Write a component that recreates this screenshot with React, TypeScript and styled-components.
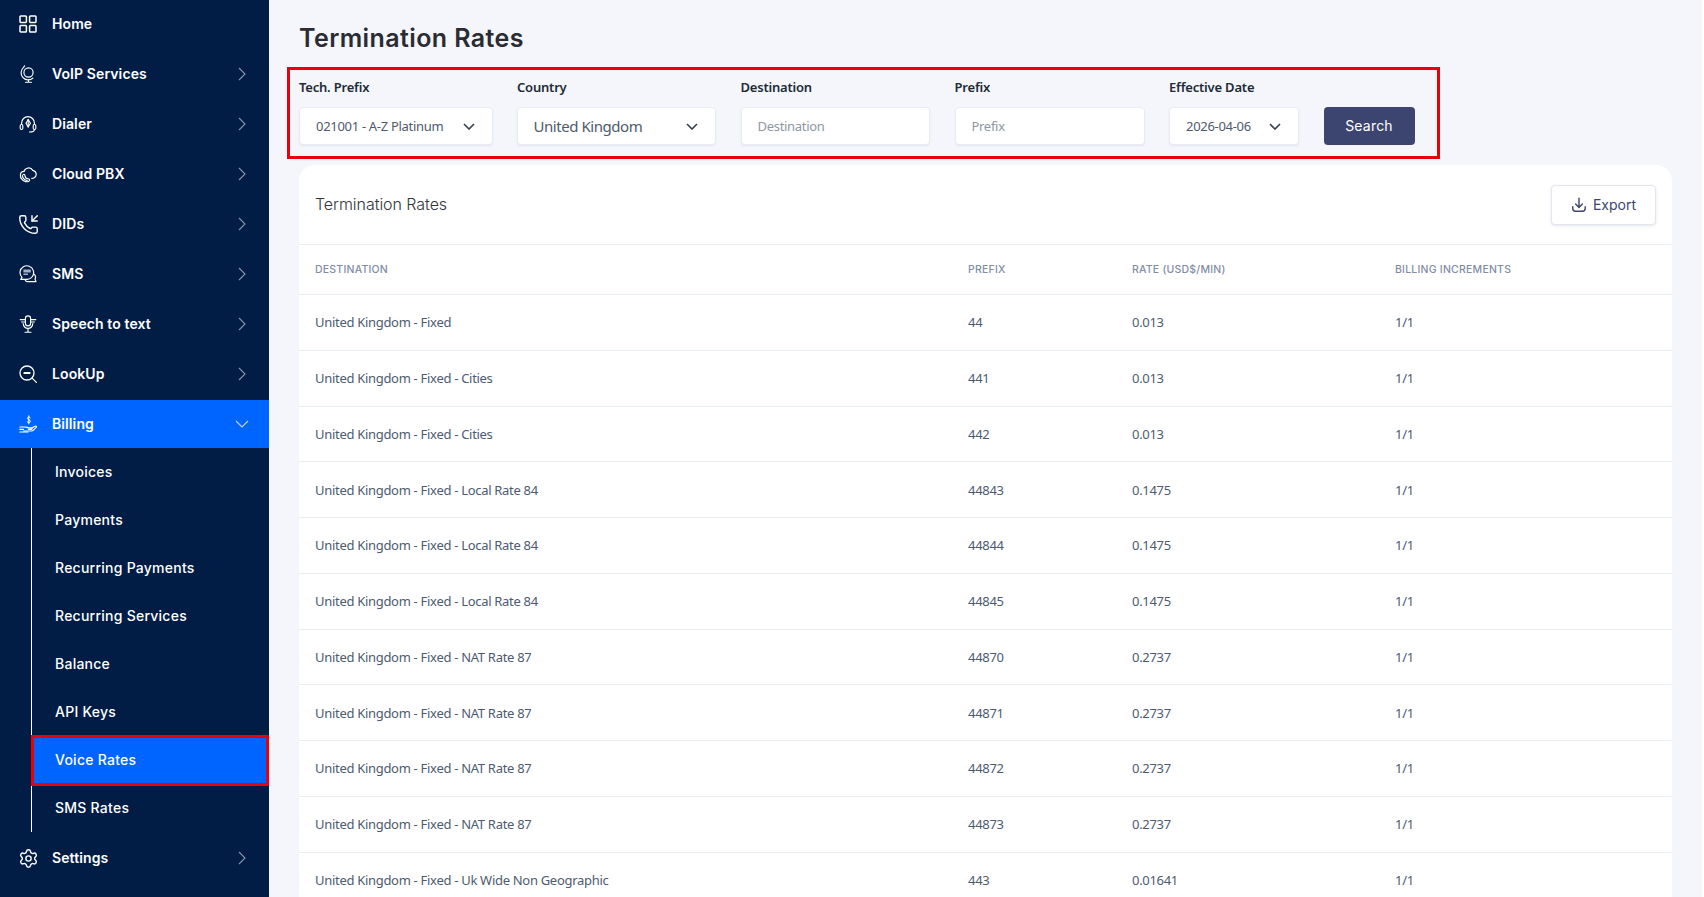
import React from 'react';
import { PhoneIncoming, Settings as SettingsIcon } from 'lucide-react';
import styled, { createGlobalStyle } from 'styled-components';

const HEADING_FONT = `Inter, "Liberation Sans", sans-serif`;
const BODY_FONT = `"Noto Sans", "Open Sans", sans-serif`;

const GlobalStyle = createGlobalStyle`
  html, body {
    margin: 0;
    height: 100%;
    background: #ffffff;
    overflow: hidden;
  }
  * {
    box-sizing: border-box;
  }
`;

// Sidebar icons, all on an 18 unit grid
const Glyph: React.FC<{ children: React.ReactNode; size?: number }> = ({ children, size = 18 }) => (
  <svg
    width={size}
    height={size}
    viewBox="0 0 18 18"
    fill="none"
    stroke="currentColor"
    strokeWidth={1.15}
    strokeLinecap="round"
    strokeLinejoin="round"
  >
    {children}
  </svg>
);

const HomeIcon = () => (
  <Glyph>
    <g strokeWidth={1.5}>
      <rect x="1" y="1" width="6.4" height="6.4" rx="0.8" />
      <rect x="10.6" y="1" width="6.4" height="6.4" rx="0.8" />
      <rect x="1" y="10.6" width="6.4" height="6.4" rx="0.8" />
      <rect x="10.6" y="10.6" width="6.4" height="6.4" rx="0.8" />
    </g>
  </Glyph>
);

const GlobeIcon = () => (
  <Glyph>
    <circle cx="9.5" cy="7.5" r="4.6" />
    <path d="M5.6 0.8 4.6 2.4A7 7 0 0 0 13.8 13.2M9.5 14.5V17M6.5 17.2H12.5" />
  </Glyph>
);

const HeadsetIcon = () => (
  <Glyph>
    <path d="M2.6 9.5V8A6.4 6.4 0 0 1 15.4 8V9.5" />
    <rect x="1.2" y="9.5" width="2.6" height="5" rx="1.2" />
    <rect x="14.2" y="9.5" width="2.6" height="5" rx="1.2" />
    <path d="M15.5 14.5C15.5 16.5 13.5 17 10.5 17" />
    <path d="M9.2 4.5 11.4 8.2 9.2 12 7 8.2Z" />
    <path d="M9.2 4.5V12" />
  </Glyph>
);

const CloudPhoneIcon = () => (
  <Glyph>
    <path d="M5 6.4A4.8 4.8 0 0 1 13.8 5.4 4 4 0 0 1 15.2 12.8C14.6 13.2 13.8 13.4 12.8 13.4" />
    <path d="M5 6.4A3.8 3.8 0 0 0 1.4 10.2C1.2 13 3.6 16 6.6 16.6 8.6 17 10.2 16.4 10.6 15.2 10.9 14.2 10 13.8 9 13.8 7.6 13.8 6.2 12.4 6 10.8 5.9 9.6 5 9 4.2 9.6" />
    <path d="M3.4 10.4C3.4 13 5.8 15.4 8.2 15.6" />
  </Glyph>
);

const ChatIcon = () => (
  <Glyph>
    <path d="M3 12.4A6.8 6.8 0 1 1 8.2 14.4H1.8Z" />
    <path d="M14.4 8.8C16.4 10 17 12.2 16 14L17 16.6H8.4C7.4 16.6 6.6 16 6.2 15" />
    <rect x="4.4" y="4.6" width="7.4" height="3" rx="0.5" fill="currentColor" stroke="none" opacity="0.65" />
    <rect x="4.4" y="8.6" width="4.6" height="1.5" rx="0.4" fill="currentColor" stroke="none" opacity="0.65" />
  </Glyph>
);

const MicIcon = () => (
  <Glyph>
    <rect x="6.4" y="0.8" width="5.2" height="10" rx="2.6" />
    <path d="M4.2 8.6A4.8 4.8 0 0 0 13.8 8.6M9 13.5V17M6 17.2H12" />
    <path d="M1.2 4.6H6.4M11.6 4.6H16.8M2.6 7H6.4M11.6 7H15.4" />
  </Glyph>
);

const LookupIcon = () => (
  <Glyph>
    <circle cx="8" cy="8" r="7" strokeWidth={1.3} />
    <path d="M4.6 8H11.4" strokeWidth={2} strokeLinecap="butt" />
    <path d="M13.2 13.2 17.6 17.6" />
  </Glyph>
);

const BillingIcon = () => (
  <Glyph>
    <path d="M11.2 2.6C10.6 1.8 8.4 1.8 8.4 3.4 8.4 5 11.4 4.6 11.4 6.3 11.4 7.8 9 7.8 8.2 6.9M9.8 0.8V8.8" strokeWidth={1} />
    <path d="M0.8 12H6.2C7.6 12 8.2 12.8 9.6 12.8H12.2C13.4 12.8 13.4 14.4 12.2 14.4H9.4" />
    <path d="M12.8 13 16 11.2C17.2 10.6 17.9 11.8 17 12.6L14.2 15.4C13.8 15.8 13.4 16 12.8 16H4.6" />
    <path d="M0.8 14.4H4.4M0.8 17H9" />
  </Glyph>
);

const ChevronRight = () => (
  <svg width="8" height="14" viewBox="0 0 8 14" fill="none" stroke="#8a94a6" strokeWidth="1.1">
    <path d="M1 1 7 7 1 13" />
  </svg>
);

const ChevronDown = styled.svg.attrs({
  width: 14,
  height: 8,
  viewBox: '0 0 14 8',
  fill: 'none',
  stroke: '#c9d4e8',
  strokeWidth: 1.1,
  children: <path d="M1 1 7 7 13 1" />,
})`
  margin-right: -3px;
`;

const SelectCaret = () => (
  <svg width="12" height="7" viewBox="0 0 12 7" fill="none" stroke="#343f4f" strokeWidth="1.6">
    <path d="M1 1 6 6 11 1" />
  </svg>
);

const ExportIcon = () => (
  <svg width="16" height="16" viewBox="0 0 18 18" fill="none" stroke="#3c4570" strokeWidth="1.6" strokeLinecap="round" strokeLinejoin="round">
    <path d="M9 1.5V11.5M5.2 8 9 11.8 12.8 8" />
    <path d="M2 11V13A3 3 0 0 0 5 16H13A3 3 0 0 0 16 13V11" />
  </svg>
);

const Shell = styled.div`
  display: flex;
  width: 1704px;
  height: 897px;
  overflow: hidden;
  font-family: ${BODY_FONT};
`;

const Sidebar = styled.nav`
  flex: 0 0 269px;
  display: flex;
  flex-direction: column;
  gap: 2px;
  background: #011d45;
  font-family: ${HEADING_FONT};
`;

const NavItem = styled.div<{ $active?: boolean }>`
  height: 48px;
  display: flex;
  align-items: center;
  gap: 15px;
  padding: 0 23px 0 19px;
  color: #ffffff;
  background: ${(p) => (p.$active ? '#0065ff' : 'transparent')};
`;

const NavIcon = styled.span`
  flex: 0 0 18px;
  width: 18px;
  height: 18px;
  display: flex;
  align-items: center;
  justify-content: center;

  svg {
    flex-shrink: 0;
  }
`;

const NavLabel = styled.span`
  flex: 1;
  padding-bottom: 2px;
  font-size: 14px;
  font-weight: 600;
  letter-spacing: 0.1px;
`;

const SubList = styled.div`
  margin: -2px 0 0 31px;
  border-left: 1px solid #ffffff;
`;

const SubItem = styled.div<{ $selected?: boolean }>`
  position: relative;
  height: 48px;
  display: flex;
  align-items: center;
  padding: 0 0 2px 23px;
  color: #ffffff;
  font-size: 14px;
  font-weight: 500;
  letter-spacing: 0.25px;
  background: ${(p) => (p.$selected ? '#0065ff' : 'transparent')};

  ${(p) =>
    p.$selected &&
    `
    &::after {
      content: '';
      position: absolute;
      inset: -1px 0 -2px -1px;
      border: 3px solid #e8000b;
    }
  `}
`;

const Main = styled.main`
  flex: 1;
  min-width: 0;
  margin-right: 2px;
  padding: 21px 30px 0 18px;
  background: #f4f6fb;
`;

const PageTitle = styled.h1`
  margin: 0 0 12px 12px;
  font-family: ${HEADING_FONT};
  font-size: 25px;
  line-height: 34px;
  font-weight: 600;
  letter-spacing: 0.4px;
  color: #2b2b33;
`;

const FilterBar = styled.form`
  width: 1153px;
  display: flex;
  align-items: flex-end;
  gap: 24.5px;
  padding: 7px 10px 11px 9px;
  border: 3px solid #e8000b;
`;

const Field = styled.div<{ $width: number }>`
  flex: 0 0 ${(p) => p.$width}px;
`;

const FieldLabel = styled.div`
  margin-bottom: 10px;
  font-size: 13px;
  line-height: 20px;
  font-weight: 600;
  letter-spacing: -0.2px;
  color: #212b36;
`;

const FieldBox = styled.div<{ $large?: boolean }>`
  height: 38px;
  display: flex;
  align-items: center;
  justify-content: space-between;
  padding: 0 17px 0 ${(p) => (p.$large ? 15.5 : 16)}px;
  background: #ffffff;
  border: 1px solid #e9ecf2;
  border-radius: 4px;
  box-shadow: 0 1px 2px rgba(40, 50, 80, 0.08);
  font-size: ${(p) => (p.$large ? 15 : 13)}px;
  letter-spacing: ${(p) => (p.$large ? -0.45 : -0.3)}px;
  color: #4e5a6b;
`;

const TextInput = styled.input`
  width: 100%;
  height: 38px;
  padding: 0 16px;
  background: #ffffff;
  border: 1px solid #e9ecf2;
  border-radius: 4px;
  box-shadow: 0 1px 2px rgba(40, 50, 80, 0.08);
  font-family: ${BODY_FONT};
  font-size: 13px;
  letter-spacing: -0.3px;
  outline: none;

  &::placeholder {
    color: #8e96a3;
    opacity: 1;
  }
`;

const SearchButton = styled.button`
  flex: 0 0 91px;
  height: 38px;
  padding: 0 0 2px;
  border: none;
  border-radius: 4px;
  background: #3c4570;
  color: #ffffff;
  font-family: ${HEADING_FONT};
  font-size: 14px;
  font-weight: 400;
  letter-spacing: 0.2px;
`;

const Card = styled.section`
  margin: 6px 0 0 12px;
  background: #ffffff;
  border-radius: 16px 16px 0 0;
  overflow: hidden;
`;

const CardHeader = styled.header`
  height: 80px;
  display: flex;
  align-items: center;
  justify-content: space-between;
  padding: 0 16px;
  border-bottom: 1px solid #e9eef5;
`;

const CardTitle = styled.h2`
  margin: 0;
  padding-bottom: 2px;
  font-family: ${HEADING_FONT};
  font-size: 16px;
  font-weight: 300;
  letter-spacing: -0.05px;
  color: #33343c;
`;

const ExportButton = styled.button`
  width: 105px;
  height: 40px;
  display: flex;
  align-items: center;
  justify-content: center;
  gap: 6px;
  background: #ffffff;
  border: 1px solid #e3e6ef;
  border-radius: 4px;
  box-shadow: 0 1px 3px rgba(40, 50, 80, 0.12);
  font-family: ${HEADING_FONT};
  font-size: 14px;
  font-weight: 400;
  color: #3c4570;
`;

const Row = styled.div<{ $head?: boolean }>`
  display: grid;
  grid-template-columns: 653px 164px 263px 1fr;
  align-items: center;
  height: ${(p) => (p.$head ? 50 : 55.75)}px;
  border-bottom: 1px solid #e9eef5;
`;

const HeadCell = styled.div`
  padding-left: 16px;
  font-family: ${HEADING_FONT};
  font-size: 10.5px;
  font-weight: 500;
  letter-spacing: 0.22px;
  text-transform: uppercase;
  color: #828da3;
`;

const Cell = styled.div`
  padding-left: 16px;
  font-size: 13px;
  letter-spacing: -0.3px;
  color: #4c5b70;
`;

const NAV_TOP = [
  { label: 'VoIP Services', icon: <GlobeIcon /> },
  { label: 'Dialer', icon: <HeadsetIcon /> },
  { label: 'Cloud PBX', icon: <CloudPhoneIcon /> },
  { label: 'DIDs', icon: <PhoneIncoming size={21} strokeWidth={1.6} /> },
  { label: 'SMS', icon: <ChatIcon /> },
  { label: 'Speech to text', icon: <MicIcon /> },
  { label: 'LookUp', icon: <LookupIcon /> },
];

const BILLING_ITEMS = [
  'Invoices',
  'Payments',
  'Recurring Payments',
  'Recurring Services',
  'Balance',
  'API Keys',
  'Voice Rates',
  'SMS Rates',
];

const RATES = [
  ['United Kingdom - Fixed', '44', '0.013'],
  ['United Kingdom - Fixed - Cities', '441', '0.013'],
  ['United Kingdom - Fixed - Cities', '442', '0.013'],
  ['United Kingdom - Fixed - Local Rate 84', '44843', '0.1475'],
  ['United Kingdom - Fixed - Local Rate 84', '44844', '0.1475'],
  ['United Kingdom - Fixed - Local Rate 84', '44845', '0.1475'],
  ['United Kingdom - Fixed - NAT Rate 87', '44870', '0.2737'],
  ['United Kingdom - Fixed - NAT Rate 87', '44871', '0.2737'],
  ['United Kingdom - Fixed - NAT Rate 87', '44872', '0.2737'],
  ['United Kingdom - Fixed - NAT Rate 87', '44873', '0.2737'],
  ['United Kingdom - Fixed - Uk Wide Non Geographic', '443', '0.01641'],
];

const App: React.FC = () => {
  return (
    <>
      <GlobalStyle />
      <Shell>
        <Sidebar>
          <NavItem>
            <NavIcon>
              <HomeIcon />
            </NavIcon>
            <NavLabel>Home</NavLabel>
          </NavItem>
          {NAV_TOP.map((item) => (
            <NavItem key={item.label}>
              <NavIcon>{item.icon}</NavIcon>
              <NavLabel>{item.label}</NavLabel>
              <ChevronRight />
            </NavItem>
          ))}
          <NavItem $active>
            <NavIcon>
              <BillingIcon />
            </NavIcon>
            <NavLabel>Billing</NavLabel>
            <ChevronDown />
          </NavItem>
          <SubList>
            {BILLING_ITEMS.map((label) => (
              <SubItem key={label} $selected={label === 'Voice Rates'}>
                {label}
              </SubItem>
            ))}
          </SubList>
          <NavItem>
            <NavIcon>
              <SettingsIcon size={21} strokeWidth={1.6} />
            </NavIcon>
            <NavLabel>Settings</NavLabel>
            <ChevronRight />
          </NavItem>
        </Sidebar>

        <Main>
          <PageTitle>Termination Rates</PageTitle>

          <FilterBar>
            <Field $width={193.5}>
              <FieldLabel>Tech. Prefix</FieldLabel>
              <FieldBox>
                021001 - A-Z Platinum
                <SelectCaret />
              </FieldBox>
            </Field>
            <Field $width={199}>
              <FieldLabel>Country</FieldLabel>
              <FieldBox $large>
                United Kingdom
                <SelectCaret />
              </FieldBox>
            </Field>
            <Field $width={189.5}>
              <FieldLabel>Destination</FieldLabel>
              <TextInput placeholder="Destination" />
            </Field>
            <Field $width={190}>
              <FieldLabel>Prefix</FieldLabel>
              <TextInput placeholder="Prefix" />
            </Field>
            <Field $width={130}>
              <FieldLabel>Effective Date</FieldLabel>
              <FieldBox>
                2026-04-06
                <SelectCaret />
              </FieldBox>
            </Field>
            <SearchButton type="button">Search</SearchButton>
          </FilterBar>

          <Card>
            <CardHeader>
              <CardTitle>Termination Rates</CardTitle>
              <ExportButton type="button">
                <ExportIcon />
                Export
              </ExportButton>
            </CardHeader>
            <Row $head>
              <HeadCell>Destination</HeadCell>
              <HeadCell>Prefix</HeadCell>
              <HeadCell>Rate (USD$/min)</HeadCell>
              <HeadCell>Billing Increments</HeadCell>
            </Row>
            {RATES.map(([destination, prefix, rate]) => (
              <Row key={prefix}>
                <Cell>{destination}</Cell>
                <Cell>{prefix}</Cell>
                <Cell>{rate}</Cell>
                <Cell>1/1</Cell>
              </Row>
            ))}
          </Card>
        </Main>
      </Shell>
    </>
  );
};

export default App;
